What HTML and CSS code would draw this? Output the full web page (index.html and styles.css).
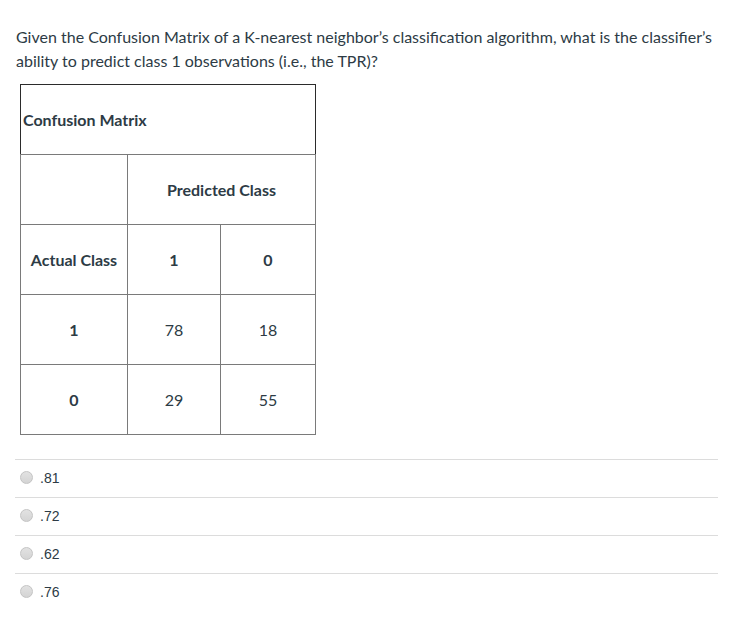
FILE: index.html
```html
<!DOCTYPE html>
<html>
<head>
<meta charset="utf-8">
<link rel="stylesheet" href="styles.css">
</head>
<body>
<div class="question">
  <p class="prompt">Given the Confusion Matrix of a K-nearest neighbor’s classification algorithm, what is the classifier’s ability to predict class 1 observations (i.e., the TPR)?</p>
  <table class="matrix">
    <colgroup><col class="c1"><col class="c2"><col class="c3"></colgroup>
    <tr><td colspan="3" class="title"><strong>Confusion Matrix</strong></td></tr>
    <tr><td></td><td colspan="2"><strong>Predicted Class</strong></td></tr>
    <tr><td><strong>Actual Class</strong></td><td><strong>1</strong></td><td><strong>0</strong></td></tr>
    <tr><td><strong>1</strong></td><td>78</td><td>18</td></tr>
    <tr><td><strong>0</strong></td><td>29</td><td>55</td></tr>
  </table>
  <div class="answers">
    <label class="answer"><span class="radio"></span><span class="atext">.81</span></label>
    <label class="answer"><span class="radio"></span><span class="atext">.72</span></label>
    <label class="answer"><span class="radio"></span><span class="atext">.62</span></label>
    <label class="answer"><span class="radio"></span><span class="atext">.76</span></label>
  </div>
</div>
</body>
</html>
```
FILE: styles.css
```css
html, body { margin: 0; padding: 0; background: #fff; }
body { font-family: Lato, "Open Sans", sans-serif; color: #2d3b45; }
.question { padding: 25px 16px 0 15px; width: 703px; }
.prompt { margin: 0 0 0 1px; font-size: 16px; line-height: 24px; }
.matrix {
  margin: 11px 0 0 5px;
  border-collapse: collapse;
  border: 1px solid #2b2b2b;
  width: 296px;
  table-layout: fixed;
  font-size: 16px;
}
.matrix col.c1 { width: 107px; }
.matrix col.c2 { width: 93px; }
.matrix col.c3 { width: 95px; }
.matrix td {
  border: 1px solid #7a7a7a;
  height: 69px;
  padding: 0;
  text-align: center;
  vertical-align: middle;
}
.matrix td.title { text-align: left; padding-left: 2px; border-color: #2b2b2b; border-bottom-color: #7a7a7a; }
.matrix strong { font-weight: 700; }
.answers { margin-top: 24px; }
.answer {
  display: flex;
  align-items: center;
  height: 38px;
  border-top: 1px solid #dcdcdc;
  box-sizing: border-box;
  padding-bottom: 2px;
}
.radio {
  width: 11px; height: 11px;
  border-radius: 50%;
  border: 1px solid #c4c4c4;
  background: linear-gradient(#e2e2e2, #d4d4d4);
  margin-left: 5px;
  margin-right: 7px;
  flex: none;
}
.atext { font-family: "Liberation Sans", Arial, sans-serif; font-size: 14px; color: #2d3b45; }
```
